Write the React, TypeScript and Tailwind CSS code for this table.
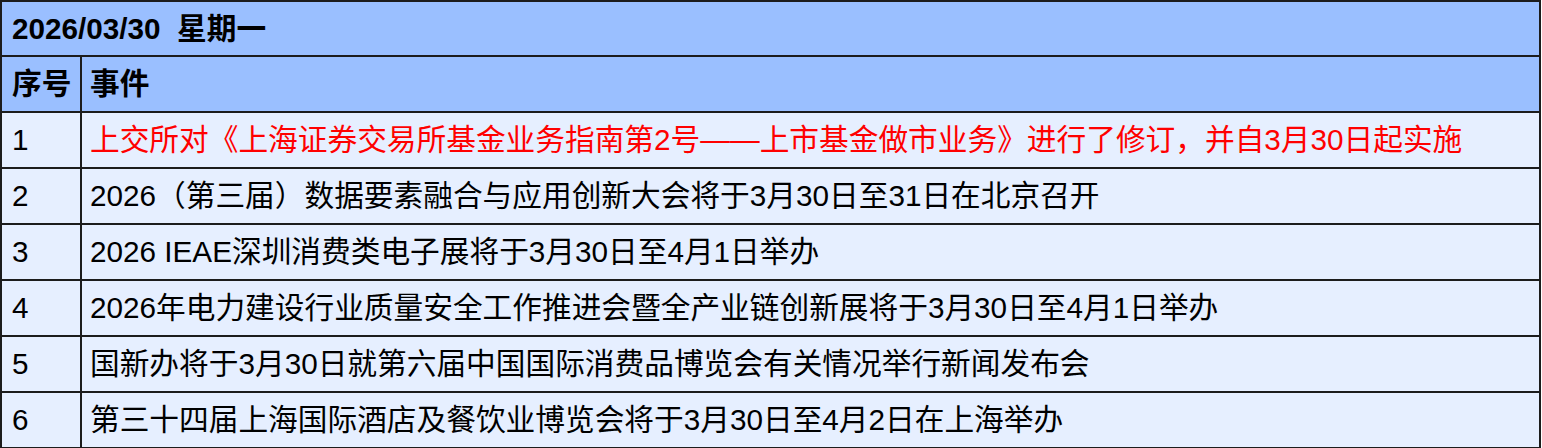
const events = [
  { text: "上交所对《上海证券交易所基金业务指南第2号——上市基金做市业务》进行了修订，并自3月30日起实施", red: true },
  { text: "2026（第三届）数据要素融合与应用创新大会将于3月30日至31日在北京召开" },
  { text: "2026 IEAE深圳消费类电子展将于3月30日至4月1日举办" },
  { text: "2026年电力建设行业质量安全工作推进会暨全产业链创新展将于3月30日至4月1日举办" },
  { text: "国新办将于3月30日就第六届中国国际消费品博览会有关情况举行新闻发布会" },
  { text: "第三十四届上海国际酒店及餐饮业博览会将于3月30日至4月2日在上海举办" },
];

export default function App() {
  return (
    <div className="bg-white font-['Liberation_Sans','Noto_Sans_CJK_SC',sans-serif] text-[29.7px] leading-none text-black">
      <table className="w-[1541px] border-collapse border-2 border-[#1c1c1c]">
        <thead>
          <tr className="h-[55px] bg-[#9abfff]">
            <th colSpan={2} className="border-2 border-[#1c1c1c] px-[10px] text-left font-bold whitespace-pre">
              {"2026/03/30  星期一"}
            </th>
          </tr>
          <tr className="h-[56px] bg-[#9abfff]">
            <th className="w-[80px] border-2 border-[#1c1c1c] pl-[10px] text-left font-bold">序号</th>
            <th className="border-2 border-[#1c1c1c] pl-[8px] text-left font-bold">事件</th>
          </tr>
        </thead>
        <tbody>
          {events.map((e, i) => (
            <tr key={i} className="h-[56px] bg-[#e6efff]">
              <td className="border-2 border-[#1c1c1c] pl-[10px]">{i + 1}</td>
              <td className={`border-2 border-[#1c1c1c] pl-[8px] ${e.red ? "text-[#ff0000]" : ""}`}>{e.text}</td>
            </tr>
          ))}
        </tbody>
      </table>
    </div>
  );
}
